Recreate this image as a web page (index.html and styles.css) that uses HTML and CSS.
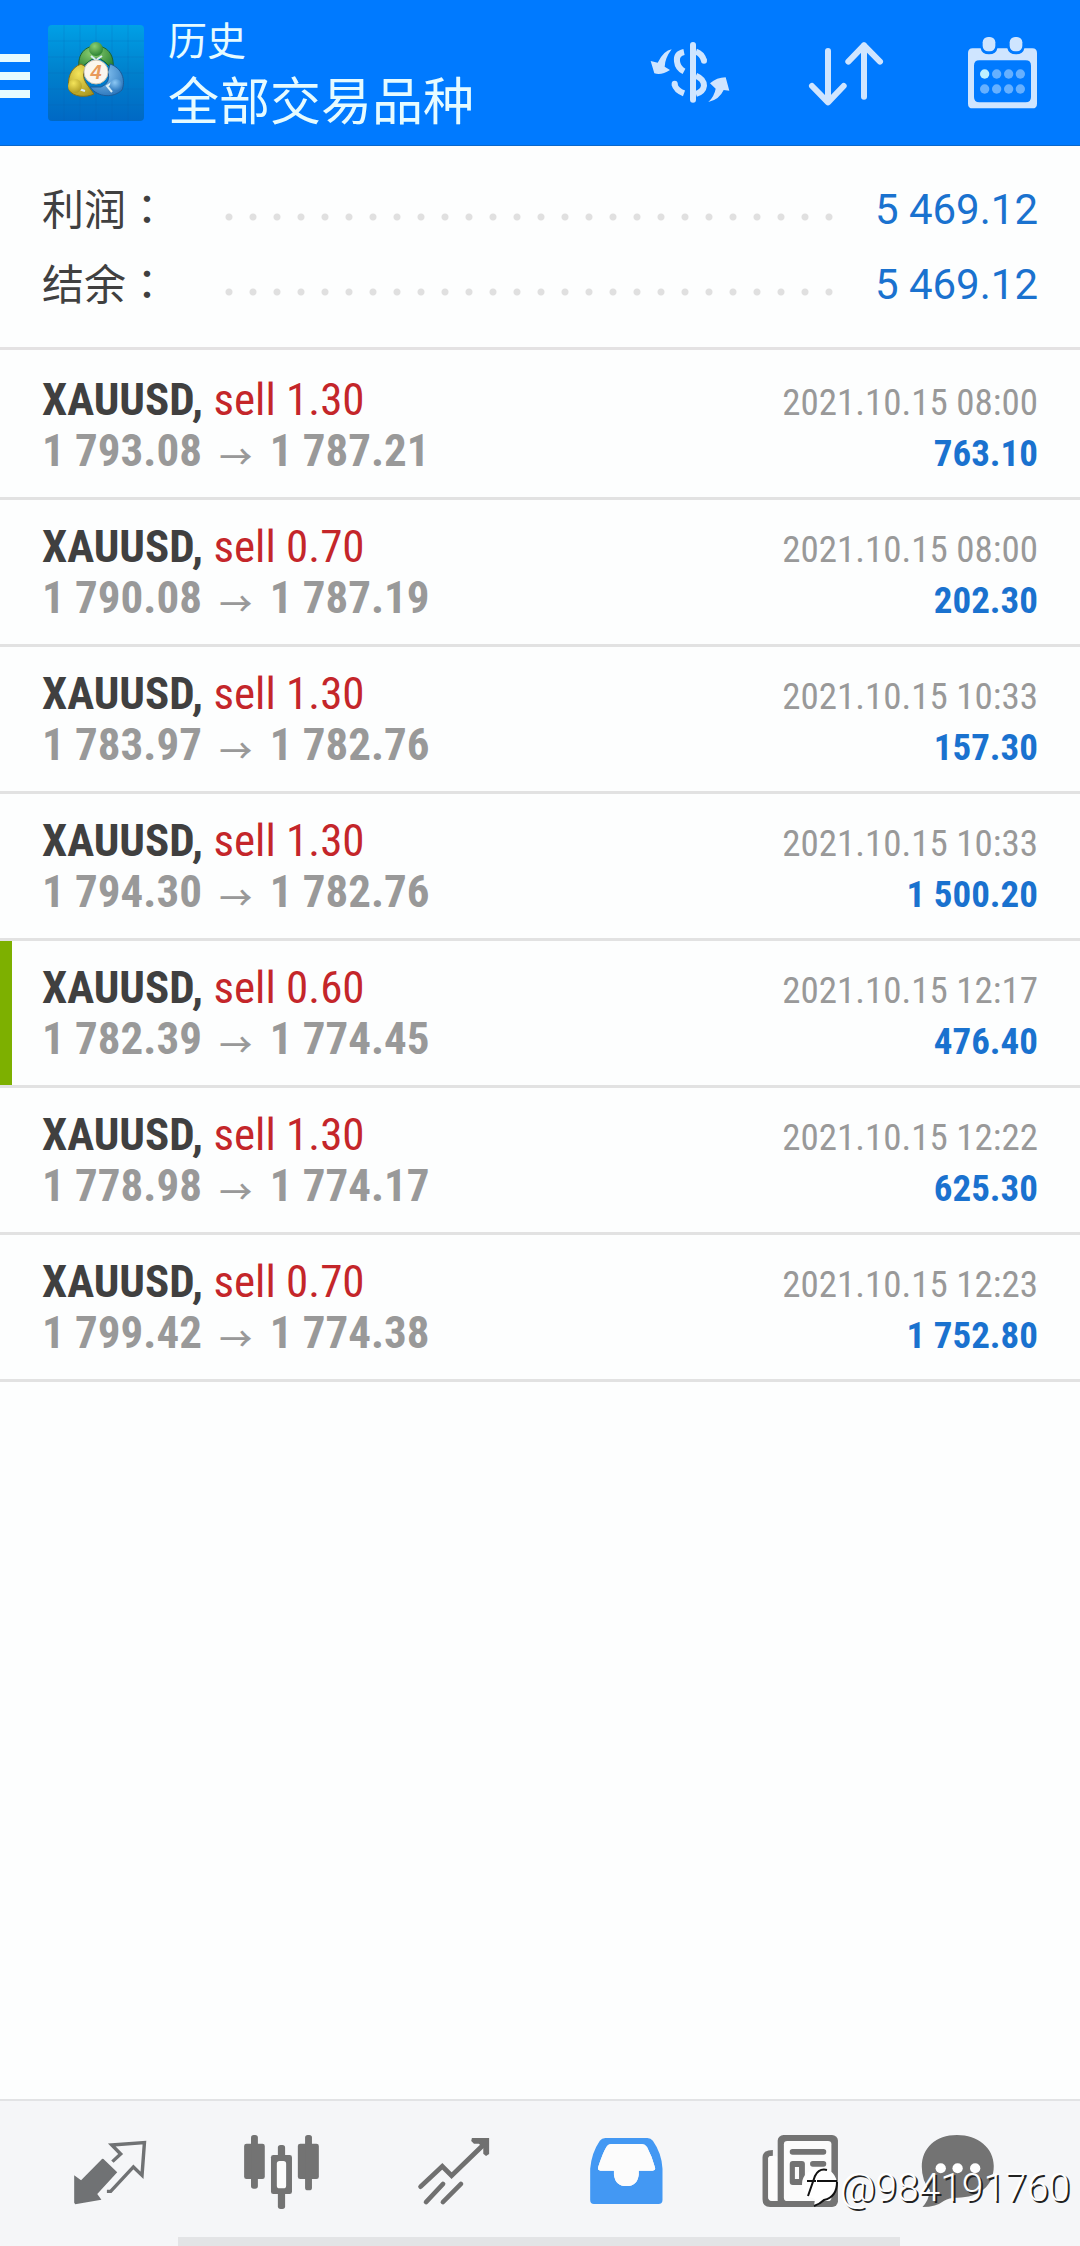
FILE: index.html
```html
<!DOCTYPE html>
<html lang="zh-CN">
<head>
<meta charset="utf-8">
<meta name="viewport" content="width=device-width, initial-scale=1">
<title>历史</title>
<link rel="stylesheet" href="styles.css">
</head>
<body>
<header class="topbar">
  <button class="menu" aria-label="菜单"><span></span><span></span><span></span></button>
  <svg class="logo" viewBox="0 0 96 96" aria-hidden="true">
    <defs>
      <linearGradient id="sky" x1="0" y1="0" x2="0" y2="1"><stop offset="0" stop-color="#00a0e6"/><stop offset=".5" stop-color="#0080cc"/><stop offset="1" stop-color="#0068c4"/></linearGradient>
      <radialGradient id="green" cx=".4" cy=".3" r=".8"><stop offset="0" stop-color="#8ccf72"/><stop offset="1" stop-color="#1f7a2c"/></radialGradient>
      <radialGradient id="gold" cx=".4" cy=".3" r=".8"><stop offset="0" stop-color="#f4e45a"/><stop offset="1" stop-color="#a8941c"/></radialGradient>
      <radialGradient id="blue" cx=".4" cy=".3" r=".8"><stop offset="0" stop-color="#8cc8f4"/><stop offset="1" stop-color="#2370b8"/></radialGradient>
    </defs>
    <rect width="96" height="96" rx="4" fill="url(#sky)"/>
    <path d="M0 16H96M0 32H96M0 48H96M0 64H96M0 80H96M16 0V96M32 0V96M48 0V96M64 0V96M80 0V96" stroke="#0a5ea8" stroke-opacity=".2"/>
    <path d="M31 44C29 28 38 21 48 21S67 28 65 45L57 37Q48 29 39 38Z" fill="url(#green)" stroke="#1c6130"/>
    <path d="M33 39C22 43 19 54 21 65C25 72 38 73 46 69L38 58Q33 50 38 42Z" fill="url(#gold)" stroke="#806f1c"/>
    <path d="M62 39C74 43 78 55 74 65C66 73 50 73 42 62L53 62Q63 58 60 47Z" fill="url(#blue)" stroke="#1d5c99"/>
    <path d="M43 31L48 35 54 31M32 57L31 64 37 66M65 57L59 61 64 67" fill="none" stroke="#d8edf4" stroke-width="2"/>
    <circle cx="48" cy="24" r="7" fill="url(#green)"/>
    <circle cx="27" cy="61" r="7" fill="url(#gold)"/>
    <circle cx="68" cy="60" r="6" fill="url(#blue)"/>
    <circle cx="48" cy="47" r="12" fill="#fbf6ee" stroke="#c9c2b0"/>
    <text x="48" y="54" class="logo-digit">4</text>
  </svg>
  <div class="titles">
    <h1>历史</h1>
    <p>全部交易品种</p>
  </div>
  <nav class="actions" aria-label="操作">
    <button aria-label="交易品种">
      <svg viewBox="126 74 288 288" fill="none" stroke="#cfe5ff">
        <path d="M279 134V298" stroke-width="18" stroke-linecap="round"/>
        <path d="M252 155Q228 160 231 183Q233 203 252 213M223 251Q228 270 252 279" stroke-width="18"/>
        <path d="M288 154Q306 160 312 181M288 226Q312 236 312 256Q310 274 288 281" stroke-width="18"/>
        <circle cx="312" cy="181" r="9" fill="#cfe5ff" stroke="none"/><circle cx="224" cy="250" r="9" fill="#cfe5ff" stroke="none"/>
        <path d="M215 147Q192 150 173 187L152 182L163 219Q184 226 210 209L194 199Q195 173 215 147ZM325 305Q343 288 347 265L330 249Q350 231 377 231L388 271L371 269Q358 298 325 305Z" fill="#cfe5ff" stroke="none"/>
      </svg>
    </button>
    <button aria-label="排序">
      <svg viewBox="594 74 288 288" fill="none" stroke="#cfe5ff" stroke-width="18" stroke-linecap="round" stroke-linejoin="round">
        <path d="M684 152V305M636 257L684 306 731 257M792 289V135M745 184L792 135 840 184"/>
      </svg>
    </button>
    <button aria-label="日期">
      <svg viewBox="1062 74 288 288" fill="#cfe5ff">
        <path fill-rule="evenodd" d="M1118 144H1142Q1145 162 1167 162T1192 144H1222Q1226 162 1248 162T1273 144H1297Q1311 144 1311 158V310Q1311 324 1297 324H1118Q1104 324 1104 310V158Q1104 144 1118 144ZM1138 180Q1122 180 1122 196V290Q1122 306 1138 306H1277Q1293 306 1293 290V196Q1293 180 1277 180Z"/>
        <rect x="1148" y="110" width="38" height="43" rx="16"/><rect x="1229" y="110" width="38" height="43" rx="16"/>
        <circle cx="1154" cy="221" r="14" fill="#bdf0ff"/>
        <g fill="#66b0ff"><circle cx="1190" cy="221" r="14"/><circle cx="1226" cy="221" r="14"/><circle cx="1261" cy="221" r="14"/><circle cx="1154" cy="266" r="14"/><circle cx="1190" cy="266" r="14"/><circle cx="1226" cy="266" r="14"/><circle cx="1261" cy="266" r="14"/></g>
      </svg>
    </button>
  </nav>
</header>

<main class="content">
  <dl class="summary">
    <div><dt>利润<span lang="zh-TW">：</span></dt><dd>5 469.12</dd></div>
    <div><dt>结余<span lang="zh-TW">：</span></dt><dd>5 469.12</dd></div>
  </dl>
  <ul class="deals">
    <li>
      <div class="line"><span class="symbol">XAUUSD, <span class="side">sell 1.30</span></span><time>2021.10.15 08:00</time></div>
      <div class="line"><span class="prices">1 793.08 <i>→</i> 1 787.21</span><span class="profit">763.10</span></div>
    </li>
    <li>
      <div class="line"><span class="symbol">XAUUSD, <span class="side">sell 0.70</span></span><time>2021.10.15 08:00</time></div>
      <div class="line"><span class="prices">1 790.08 <i>→</i> 1 787.19</span><span class="profit">202.30</span></div>
    </li>
    <li>
      <div class="line"><span class="symbol">XAUUSD, <span class="side">sell 1.30</span></span><time>2021.10.15 10:33</time></div>
      <div class="line"><span class="prices">1 783.97 <i>→</i> 1 782.76</span><span class="profit">157.30</span></div>
    </li>
    <li>
      <div class="line"><span class="symbol">XAUUSD, <span class="side">sell 1.30</span></span><time>2021.10.15 10:33</time></div>
      <div class="line"><span class="prices">1 794.30 <i>→</i> 1 782.76</span><span class="profit">1 500.20</span></div>
    </li>
    <li class="marked">
      <div class="line"><span class="symbol">XAUUSD, <span class="side">sell 0.60</span></span><time>2021.10.15 12:17</time></div>
      <div class="line"><span class="prices">1 782.39 <i>→</i> 1 774.45</span><span class="profit">476.40</span></div>
    </li>
    <li>
      <div class="line"><span class="symbol">XAUUSD, <span class="side">sell 1.30</span></span><time>2021.10.15 12:22</time></div>
      <div class="line"><span class="prices">1 778.98 <i>→</i> 1 774.17</span><span class="profit">625.30</span></div>
    </li>
    <li>
      <div class="line"><span class="symbol">XAUUSD, <span class="side">sell 0.70</span></span><time>2021.10.15 12:23</time></div>
      <div class="line"><span class="prices">1 799.42 <i>→</i> 1 774.38</span><span class="profit">1 752.80</span></div>
    </li>
  </ul>
</main>

<footer class="bottom">
  <nav class="tabs" aria-label="主导航">
    <button aria-label="行情">
      <svg viewBox="168 150 302 252" preserveAspectRatio="none">
        <path d="M300 237L340 277L282 342L294 359L218 373L215 368V286L235 301L293 240Q297 235 300 237Z" fill="#707274"/>
        <path d="M326 245L350 222L324 195L419 188L412 286L387 261L321 334L310 334" fill="none" stroke="#707274" stroke-width="10"/>
      </svg>
    </button>
    <button aria-label="图表">
      <svg viewBox="668 150 302 252" preserveAspectRatio="none" fill="#737373">
        <rect x="709" y="191" width="60" height="106" rx="7"/><rect x="729" y="165" width="20" height="161" rx="8"/>
        <rect x="865" y="191" width="61" height="106" rx="7"/><rect x="886" y="165" width="20" height="166" rx="8"/>
        <rect x="807" y="195" width="21" height="192" rx="8"/><rect x="787" y="225" width="61" height="117" rx="7"/>
        <rect x="804" y="243" width="27" height="82" rx="8" fill="#fbfbfb"/>
      </svg>
    </button>
    <button aria-label="交易">
      <svg viewBox="1167 150 302 252" preserveAspectRatio="none" fill="none" stroke="#707070" stroke-width="14" stroke-linecap="round">
        <path d="M1221 320L1284 259L1311 287L1406 192M1237 366L1286 312M1286 366L1338 312"/>
        <path d="M1370 174H1420V222L1411 228L1403 221V203L1390 191H1376L1368 183Z" fill="#707070" stroke="none"/>
      </svg>
    </button>
    <button aria-label="历史" aria-current="page">
      <svg viewBox="99 150 302 252" preserveAspectRatio="none">
        <path fill-rule="evenodd" fill="#4398f3" d="M190 174H312Q322 174 328 182Q354 220 356 266V360Q356 372 344 372H157Q146 372 146 360V266Q150 218 174 182Q180 174 190 174ZM208 192Q198 192 193 201Q182 220 169 262Q167 272 176 272H215V284Q219 318 251 318T287 284V272H327Q337 272 334 262Q325 228 311 201Q305 192 296 192Z"/>
        <path fill="#fcfcfc" d="M208 192H296Q305 192 311 201Q325 228 334 262Q337 272 327 272H287V284Q283 318 251 318T215 284V272H176Q167 272 169 262Q182 220 193 201Q198 192 208 192Z"/>
      </svg>
    </button>
    <button aria-label="新闻">
      <svg viewBox="598 150 302 252" preserveAspectRatio="none" fill="#737373">
        <path d="M676 210V227Q664 227 662 234V352Q662 363 675 363H720V381H668Q646 381 646 358V232Q646 210 676 210Z"/>
        <rect x="664" y="228" width="25" height="134" rx="7" fill="#fcfcfc"/>
        <rect x="690" y="165" width="175" height="216" rx="17"/>
        <rect x="708" y="183" width="138" height="180" rx="10" fill="#fbfbfb"/>
        <rect x="725" y="207" width="106" height="17" rx="8"/><rect x="725" y="243" width="44" height="72" rx="9"/>
        <rect x="740" y="261" width="12" height="36" fill="#fbfbfb"/><rect x="784" y="243" width="47" height="17" rx="8"/>
      </svg>
    </button>
    <button aria-label="聊天">
      <svg viewBox="1098 150 302 252" preserveAspectRatio="none">
        <path fill="#737373" d="M1211 165C1272 165 1318 204 1318 258C1318 318 1276 353 1212 353Q1190 352 1174 362Q1150 381 1111 381Q1129 362 1133 331Q1109 302 1109 260C1109 204 1150 165 1211 165Z"/>
        <g fill="#fff"><circle cx="1164" cy="265" r="15"/><circle cx="1213" cy="265" r="15"/><circle cx="1264" cy="265" r="15"/></g>
      </svg>
    </button>
  </nav>
  <div class="gesture"></div>
  <div class="watermark">
    <svg viewBox="0 0 36 40" aria-hidden="true">
      <path d="M18 0C29 0 35 8 35 16C35 25 29 31 22 32Q19 37 12 38L13 31C5 29 0 23 0 16C0 7 8 0 18 0Z" fill="#fff"/>
      <path d="M25 2Q17 0 13 8L6 28M5 13H14M15 13H35" fill="none" stroke="#111" stroke-width="2"/>
      <path d="M35 14Q35 29 22 32Q18 36 12 38" fill="none" stroke="#111" stroke-width="2"/>
    </svg>
    <span>@984191760</span>
  </div>
</footer>
</body>
</html>
```
FILE: styles.css
```css
* { box-sizing: border-box; }

body {
  margin: 0;
  min-height: 100vh;
  display: flex;
  flex-direction: column;
  background: #fdfefe;
  color: #404040;
  font-family: Roboto, "Noto Sans CJK SC", sans-serif;
}

h1, p, dl, dd, ul { margin: 0; padding: 0; }
svg { display: block; }

button {
  display: flex;
  align-items: center;
  justify-content: center;
  padding: 0;
  border: 0;
  background: none;
}

.topbar {
  display: flex;
  align-items: center;
  height: 146px;
  background: #007aff;
  border-bottom: 1px solid #0a68cc;
  color: #e6fbff;
}

.menu {
  flex-direction: column;
  align-items: stretch;
  gap: 10px;
  width: 30px;
  margin: 6px 18px 0 0;
}
.menu span { height: 8px; background: #e6fbff; }

.logo { width: 96px; height: 96px; margin-right: 24px; }
.logo-digit {
  font: italic 700 20px "Liberation Sans", sans-serif;
  fill: #e89a5c;
  text-anchor: middle;
}

.titles { flex: 1; white-space: nowrap; }
.titles h1 { font-size: 39px; font-weight: 400; line-height: 60px; }
.titles p { font-size: 51px; line-height: 62px; }

.actions { display: flex; }
.actions button { width: 156px; }
.actions svg { width: 96px; height: 96px; }

.content { flex: 1; }

.summary {
  padding: 26px 42px 25px;
  border-bottom: 3px solid #e4e2e3;
  font-size: 42px;
  line-height: 75px;
}
.summary div { display: flex; align-items: center; height: 75px; }
.summary dt {
  align-self: flex-start;
  font-family: "Noto Sans CJK SC", sans-serif;
  line-height: 69px;
}
.summary dt span { font-family: "Noto Sans CJK TC", sans-serif; }
.summary div::after {
  content: "";
  order: 1;
  flex: 1;
  height: 8px;
  margin: 14px 42px 0 49px;
  background: radial-gradient(circle at 12px 4px, #e0e0e0 3px, transparent 4px) 0 0 / 24px 8px repeat-x;
}
.summary dd { order: 2; color: #1a72cf; }

.deals { padding-top: 3px; list-style: none; }
.deals li {
  padding: 21px 42px;
  border-bottom: 3px solid #e2e2e2;
  font-family: "Roboto Condensed", "Liberation Sans Narrow", Roboto, sans-serif;
}
.deals .marked { box-shadow: inset 12px 0 #7db000; }
.line {
  display: flex;
  align-items: baseline;
  justify-content: space-between;
  height: 51px;
  font-size: 45px;
  line-height: 51px;
  white-space: nowrap;
}
.symbol { font-weight: 700; }
.side { font-weight: 400; color: #c4262a; }
.prices { font-weight: 700; color: #999; }
.prices i {
  margin: 0 7px;
  font: 500 33px/33px "Noto Sans CJK SC", sans-serif;
  vertical-align: -3px;
}
.line time, .profit { font-size: 37px; }
.line time { color: #999; }
.profit { font-weight: 700; color: #1a72cf; }

.bottom {
  position: relative;
  border-top: 2px solid #e2e3e5;
  background: #f5f6f8;
}
.tabs {
  display: grid;
  grid-template-columns: repeat(6, 1fr);
  height: 136px;
  padding: 6px 24px 0;
}
.tabs svg { width: 104px; height: 84px; }
.gesture {
  height: 9px;
  margin: 0 180px 0 178px;
  background: #e3e4e6;
}
.watermark {
  position: absolute;
  right: 10px;
  bottom: 34px;
  display: flex;
  align-items: center;
  gap: 2px;
  color: #fff;
  font: 300 39px/48px Roboto, sans-serif;
  text-shadow: 2px 2px 0 #222;
}
.watermark svg { width: 36px; height: 40px; }
```
